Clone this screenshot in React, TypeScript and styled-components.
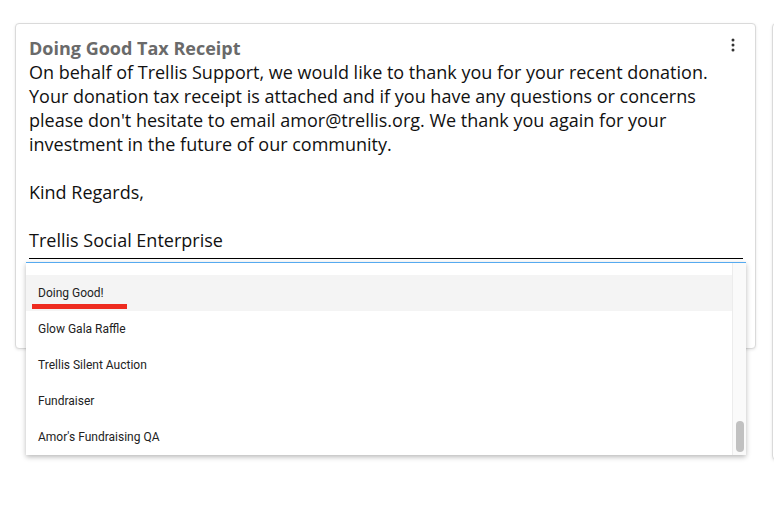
import styled, { createGlobalStyle } from 'styled-components';

const GlobalStyle = createGlobalStyle`
  html, body {
    margin: 0;
    padding: 0;
    background: #ffffff;
    overflow: hidden;
  }
  body {
    font-family: 'Open Sans', 'Liberation Sans', sans-serif;
  }
`;

const Page = styled.div`
  display: flex;
  align-items: flex-start;
  gap: 16px;
  width: 774px;
  height: 508px;
  padding: 23px 0 0 15px;
  box-sizing: border-box;
  overflow: hidden;
`;

const Card = styled.div<{ width: number; height: number }>`
  position: relative;
  flex: none;
  width: ${({ width }) => width}px;
  height: ${({ height }) => height}px;
  box-sizing: border-box;
  background: #ffffff;
  border: 1px solid #dadada;
  border-radius: 4px;
  box-shadow: 0 1px 3px rgba(0, 0, 0, 0.1);
  padding: 12px 12px 0 13px;
`;

const Field = styled.div`
  position: relative;
`;

const Editor = styled.div`
  border-bottom: 1px solid #000000;
  padding-bottom: 6px;
  font-size: 18px;
  line-height: 24px;
  color: #111111;
`;

const HeaderRow = styled.div`
  display: flex;
  justify-content: space-between;
  align-items: flex-start;
`;

const Title = styled.div`
  font-weight: 700;
  color: #6a6a6a;
`;

const MenuButton = styled.button`
  display: flex;
  align-items: center;
  justify-content: center;
  width: 20px;
  height: 16px;
  margin-top: 1px;
  padding: 0;
  border: none;
  background: none;
  color: #333333;
  cursor: pointer;
`;

const Paragraph = styled.p`
  margin: 0 0 24px;
  &:last-child {
    margin-bottom: 0;
  }
`;

const Dropdown = styled.div`
  position: absolute;
  top: calc(100% + 3px);
  left: -3px;
  width: 720px;
  height: 193px;
  display: flex;
  background: #ffffff;
  border-top: 1px solid #56aaf0;
  box-sizing: border-box;
  box-shadow: 0 2px 5px rgba(0, 0, 0, 0.28);
  z-index: 2;
`;

const OptionList = styled.ul`
  flex: 1;
  margin: 0;
  padding: 12px 0 0;
  list-style: none;
`;

const Option = styled.li<{ active?: boolean }>`
  display: flex;
  align-items: center;
  height: 36px;
  padding-left: 12px;
  background: ${({ active }) => (active ? '#f4f4f4' : 'transparent')};
  font-family: Roboto, 'Liberation Sans', sans-serif;
  font-size: 12px;
  color: #222222;
`;

const OptionLabel = styled.span<{ marked?: boolean }>`
  position: relative;
  line-height: 16px;
  &::after {
    content: '';
    display: ${({ marked }) => (marked ? 'block' : 'none')};
    position: absolute;
    left: -6px;
    top: calc(100% + 3px);
    width: 95px;
    height: 5px;
    background: #ee2b1f;
  }
`;

const ScrollTrack = styled.div`
  flex: none;
  width: 14px;
  display: flex;
  flex-direction: column;
  justify-content: flex-end;
  align-items: center;
  padding-bottom: 3px;
  box-sizing: border-box;
  background: #fafafa;
  border-left: 1px solid #ececec;
`;

const ScrollThumb = styled.div`
  width: 8px;
  height: 31px;
  border-radius: 4px;
  background: #c1c1c1;
`;

const KebabIcon = () => (
  <svg width="4" height="14" viewBox="0 0 4 14" fill="currentColor">
    <circle cx="2" cy="2" r="1.5" />
    <circle cx="2" cy="7" r="1.5" />
    <circle cx="2" cy="12" r="1.5" />
  </svg>
);

const options = [
  'Doing Good!',
  'Glow Gala Raffle',
  'Trellis Silent Auction',
  'Fundraiser',
  "Amor's Fundraising QA",
];

export default function App() {
  return (
    <>
      <GlobalStyle />
      <Page>
        <Card width={741} height={326}>
          <Field>
            <Editor>
              <HeaderRow>
                <Title>Doing Good Tax Receipt</Title>
                <MenuButton aria-label="More">
                  <KebabIcon />
                </MenuButton>
              </HeaderRow>
              <Paragraph>
                On behalf of Trellis Support, we would like to thank you for your recent donation.
                Your donation tax receipt is attached and if you have any questions or concerns
                please don't hesitate to email amor@trellis.org. We thank you again for your
                investment in the future of our community.
              </Paragraph>
              <Paragraph>Kind Regards,</Paragraph>
              <Paragraph>Trellis Social Enterprise</Paragraph>
            </Editor>
            <Dropdown>
              <OptionList>
                {options.map((name, i) => (
                  <Option key={name} active={i === 0}>
                    <OptionLabel marked={i === 0}>{name}</OptionLabel>
                  </Option>
                ))}
              </OptionList>
              <ScrollTrack>
                <ScrollThumb />
              </ScrollTrack>
            </Dropdown>
          </Field>
        </Card>
        <Card width={200} height={437} />
      </Page>
    </>
  );
}
